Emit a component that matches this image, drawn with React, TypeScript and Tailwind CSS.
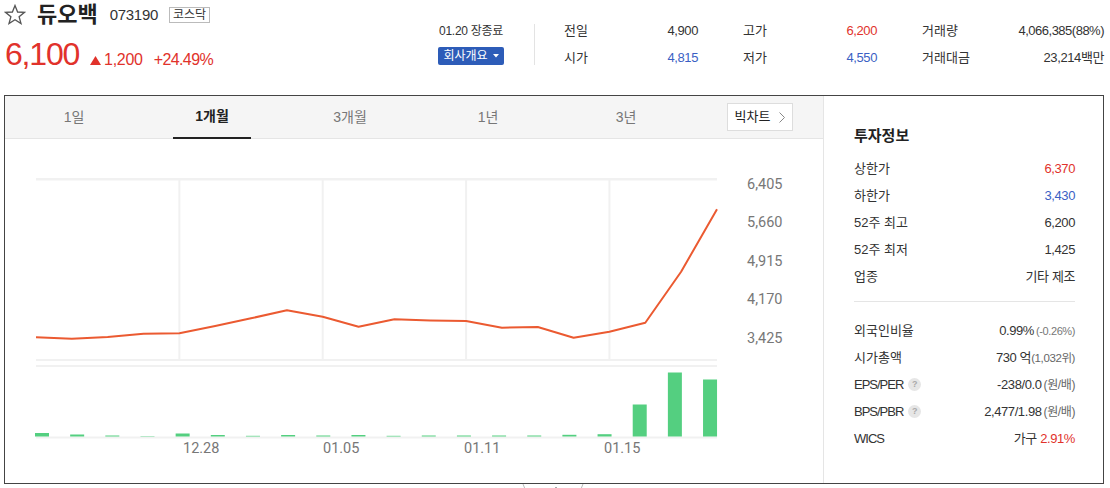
import React from "react";

const RED = "text-[#e1322b]";
const BLUE = "text-[#3b5fc4]";

// chart data in page coordinates
const px = (i: number) => 36 + i * 35.84;
const prices = [
  337.3, 338.7, 337, 333.7, 333.3, 326, 318.3, 310.3, 316.7, 326.7, 319.3, 320.5,
  321, 327.7, 327, 337.7, 331.7, 322.7, 271.7, 209.3,
];
const volumes = [
  3.5, 2, 1, 0.4, 3, 1.5, 0.7, 1.5, 1, 1.5, 0.7, 1, 1, 1, 1, 1.7, 2.3, 32, 64, 57,
];
const yLabels = [
  { v: "6,405", y: 184 },
  { v: "5,660", y: 222 },
  { v: "4,915", y: 261.5 },
  { v: "4,170", y: 299.5 },
  { v: "3,425", y: 338.5 },
];
const xLabels = [
  { v: "12.28", x: 183 },
  { v: "01.05", x: 323 },
  { v: "01.11", x: 464 },
  { v: "01.15", x: 604 },
];

const tabs = ["1일", "1개월", "3개월", "1년", "3년"];

function Star() {
  return (
    <svg width="22" height="22" viewBox="0 0 22 22">
      <polygon
        points="11,1.5 13.6,8 20.5,8.3 15.1,12.7 17,19.6 11,15.7 5,19.6 6.9,12.7 1.5,8.3 8.4,8"
        fill="none"
        stroke="#555"
        strokeWidth="1.3"
        strokeLinejoin="miter"
      />
    </svg>
  );
}

function PriceChart() {
  const line = prices.map((y, i) => `${px(i).toFixed(1)},${y}`).join(" ");
  return (
    <svg width="818" height="344" viewBox="5 139 818 344" className="block">
      {/* grid */}
      <rect x="36" y="178" width="681" height="2.5" fill="#f1f1f1" />
      <rect x="36" y="359" width="681" height="2" fill="#f1f1f1" />
      <rect x="36" y="365" width="681" height="2" fill="#f1f1f1" />
      <rect x="36" y="436.5" width="681" height="2" fill="#f1f1f1" />
      {[4, 8, 12, 16].map((i) => (
        <rect key={i} x={px(i) - 1} y="180" width="2" height="179" fill="#f1f1f1" />
      ))}

      <polyline
        points={line}
        fill="none"
        stroke="#eb5a31"
        strokeWidth="2"
        strokeLinejoin="round"
      />

      {volumes.map((h, i) => (
        <rect
          key={i}
          x={35 + i * 35.16}
          y={436.5 - h}
          width="14"
          height={h}
          fill="#54cf80"
        />
      ))}

      {yLabels.map((l) => (
        <text
          key={l.v}
          x="747"
          y={l.y}
          dominantBaseline="central"
          fill="#777"
          fontSize="14.5"
          fontFamily="Roboto, sans-serif"
        >
          {l.v}
        </text>
      ))}
      {xLabels.map((l) => (
        <text
          key={l.v}
          x={l.x}
          y="448"
          dominantBaseline="central"
          fill="#777"
          fontSize="14.5"
          fontFamily="Roboto, sans-serif"
        >
          {l.v}
        </text>
      ))}
    </svg>
  );
}

function Help() {
  return (
    <span className="ml-[5px] inline-flex h-[13px] w-[13px] items-center justify-center rounded-full bg-[#e6e6e6] text-[9px] font-bold text-[#aaa]">
      ?
    </span>
  );
}

function Row({ label, children }: { label: React.ReactNode; children: React.ReactNode }) {
  return (
    <div className="flex h-[27px] items-center justify-between text-[13px] text-[#333]">
      <div className="flex items-center">{label}</div>
      <div className="tracking-[-0.4px]">{children}</div>
    </div>
  );
}

export default function App() {
  return (
    <div className="h-[488px] w-[1110px] overflow-hidden bg-white font-['Liberation_Sans','Noto_Sans_CJK_KR',sans-serif] text-[#333]">
      {/* Header */}
      <div className="flex h-[95px]">
        <div className="w-[438px] pl-[4px]">
          <div className="flex h-[30px] items-center">
            <Star />
            <span className="ml-[11px] text-[22px] font-bold leading-none text-[#222]">듀오백</span>
            <span className="ml-[12px] text-[15px] tracking-[-0.3px] text-[#333]">073190</span>
            <span className="ml-[11px] flex h-[16px] items-center border border-[#bbb] px-[3px] text-[12px] leading-none text-[#333]">
              코스닥
            </span>
          </div>
          <div className={`mt-[6px] flex items-baseline pl-[1px] ${RED}`}>
            <span className="text-[32px] leading-[36px] tracking-[-1.2px]">6,100</span>
            <svg width="11" height="9" viewBox="0 0 11 9" className="mb-[1.5px] ml-[11px]">
              <polygon points="5.5,0 11,9 0,9" fill="#e1322b" />
            </svg>
            <span className="ml-[3px] text-[16px] tracking-[-0.3px]">1,200</span>
            <span className="ml-[11px] text-[16px] tracking-[-0.6px]">+24.49%</span>
          </div>
        </div>

        <div className="flex items-start pt-[24px]">
          <div className="flex w-[66px] flex-col items-center">
            <span className="text-[12px] leading-[15px] tracking-[-0.3px] text-[#333]">01.20 장종료</span>
            <button className="mt-[8px] flex h-[18px] w-[66px] items-center justify-center gap-[5px] rounded-[2px] bg-[#2d5cb8] text-[12px] leading-none text-white">
              <span>회사개요</span>
              <svg width="6" height="4" viewBox="0 0 6 4">
                <polygon points="0,0 6,0 3,3.5" fill="#fff" />
              </svg>
            </button>
          </div>
          <div className="ml-[30px] h-[41px] w-px bg-[#e3e3e3]" />
          <div className="ml-[29px] grid grid-cols-[134px_134px_182px] gap-x-[45px] gap-y-[13px] text-[13px] leading-[14px]">
            <div className="flex justify-between">
              <span>전일</span>
              <span className="tracking-[-0.4px]">4,900</span>
            </div>
            <div className="flex justify-between">
              <span>고가</span>
              <span className={`tracking-[-0.4px] ${RED}`}>6,200</span>
            </div>
            <div className="flex justify-between">
              <span>거래량</span>
              <span className="tracking-[-0.5px]">4,066,385(88%)</span>
            </div>
            <div className="flex justify-between">
              <span>시가</span>
              <span className={`tracking-[-0.4px] ${BLUE}`}>4,815</span>
            </div>
            <div className="flex justify-between">
              <span>저가</span>
              <span className={`tracking-[-0.4px] ${BLUE}`}>4,550</span>
            </div>
            <div className="flex justify-between">
              <span>거래대금</span>
              <span className="tracking-[-0.4px]">23,214백만</span>
            </div>
          </div>
        </div>
      </div>

      {/* Main box */}
      <div className="ml-[4px] flex h-[389px] w-[1100px] border border-[#444]">
        <div className="w-[819px] border-r border-[#e5e5e5]">
          <div className="flex h-[43px] items-stretch border-b border-[#e5e5e5] bg-[#f5f5f5]">
            {tabs.map((t, i) => (
              <div key={t} className="flex w-[138px] items-stretch justify-center">
                {i === 1 ? (
                  <span className="mb-[-1px] flex w-[78px] items-center justify-center border-b-2 border-[#222] text-[14px] font-bold text-[#222]">
                    {t}
                  </span>
                ) : (
                  <span className="flex items-center text-[14px] text-[#777]">{t}</span>
                )}
              </div>
            ))}
            <button className="ml-auto mr-[30px] flex h-[28px] w-[66px] items-center justify-center gap-[9px] self-center border border-[#ddd] bg-white text-[13px] text-[#222]">
              <span>빅차트</span>
              <svg width="6" height="11" viewBox="0 0 6 11">
                <polyline points="0.5,0.5 5.5,5.5 0.5,10.5" fill="none" stroke="#888" strokeWidth="1" />
              </svg>
            </button>
          </div>
          <PriceChart />
        </div>

        <div className="w-[279px] pl-[30px] pr-[28px] pt-[30px]">
          <div className="h-[20px] text-[15px] font-bold leading-[20px] text-[#222]">투자정보</div>
          <div className="mt-[9px]">
            <Row label="상한가">
              <span className={RED}>6,370</span>
            </Row>
            <Row label="하한가">
              <span className={BLUE}>3,430</span>
            </Row>
            <Row label="52주 최고">6,200</Row>
            <Row label="52주 최저">1,425</Row>
            <Row label="업종">기타 제조</Row>
          </div>
          <div className="mt-[11px] h-px bg-[#e5e5e5]" />
          <div className="mt-[15px]">
            <Row label="외국인비율">
              0.99%
              <span className="ml-[2px] text-[11px] text-[#777]">(-0.26%)</span>
            </Row>
            <Row label="시가총액">
              730 억<span className="text-[11.5px] text-[#666]">(1,032위)</span>
            </Row>
            <Row
              label={
                <>
                  <span className="tracking-[-1px]">EPS/PER</span>
                  <Help />
                </>
              }
            >
              -238/0.0
              <span className="ml-[2px] text-[12px] text-[#666]">(원/배)</span>
            </Row>
            <Row
              label={
                <>
                  <span className="tracking-[-1px]">BPS/PBR</span>
                  <Help />
                </>
              }
            >
              2,477/1.98
              <span className="ml-[2px] text-[12px] text-[#666]">(원/배)</span>
            </Row>
            <Row label={<span className="tracking-[-1px]">WICS</span>}>
              가구 <span className={RED}>2.91%</span>
            </Row>
          </div>
        </div>
      </div>

      {/* fold handle */}
      <svg width="64" height="5" viewBox="0 0 64 5" className="ml-[521px] block">
        <line x1="2" y1="0" x2="4" y2="5" stroke="#bbb" strokeWidth="1" />
        <line x1="62" y1="0" x2="60" y2="5" stroke="#bbb" strokeWidth="1" />
        <line x1="35" y1="3" x2="35" y2="5" stroke="#555" strokeWidth="1" />
      </svg>
    </div>
  );
}
